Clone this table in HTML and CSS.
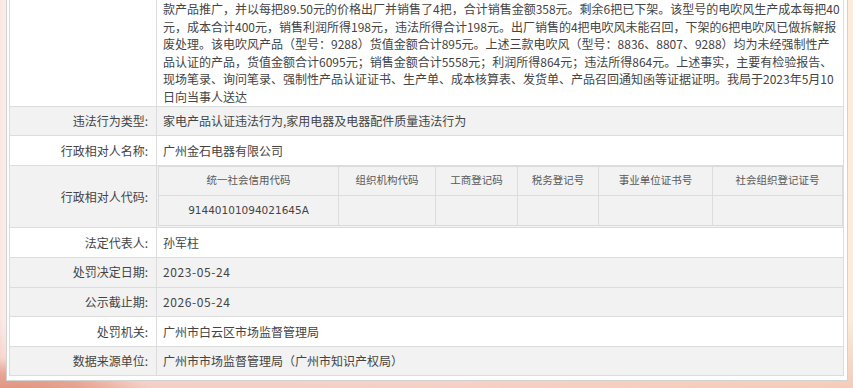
FILE: index.html
```html
<!DOCTYPE html>
<html lang="zh-CN">
<head>
<meta charset="utf-8">
<title>行政处罚信息</title>
<link rel="stylesheet" href="styles.css">
</head>
<body>
<div class="panel">
  <table class="info">
    <colgroup><col class="col-label"><col class="col-value"></colgroup>
    <tr class="row-white first">
      <th></th>
      <td class="desc">款产品推广，并以每把89.50元的价格出厂并销售了4把，合计销售金额358元。剩余6把已下架。该型号的电吹风生产成本每把40<br>元，成本合计400元，销售利润所得198元，违法所得合计198元。出厂销售的4把电吹风未能召回，下架的6把电吹风已做拆解报<br>废处理。该电吹风产品（型号：9288）货值金额合计895元。上述三款电吹风（型号：8836、8807、9288）均为未经强制性产<br>品认证的产品，货值金额合计6095元；销售金额合计5558元；利润所得864元；违法所得864元。上述事实，主要有检验报告、<br>现场笔录、询问笔录、强制性产品认证证书、生产单、成本核算表、发货单、产品召回通知函等证据证明。我局于2023年5月10<br>日向当事人送达</td>
    </tr>
    <tr class="row-gray">
      <th>违法行为类型:</th>
      <td>家电产品认证违法行为,家用电器及电器配件质量违法行为</td>
    </tr>
    <tr class="row-white">
      <th>行政相对人名称:</th>
      <td>广州金石电器有限公司</td>
    </tr>
    <tr class="row-gray row-codes">
      <th>行政相对人代码:</th>
      <td class="codes-cell">
        <table class="codes">
          <colgroup>
            <col class="c1"><col class="c2"><col class="c3"><col class="c4"><col class="c5"><col class="c6">
          </colgroup>
          <tr class="codes-head">
            <td>统一社会信用代码</td>
            <td>组织机构代码</td>
            <td>工商登记码</td>
            <td>税务登记号</td>
            <td>事业单位证书号</td>
            <td>社会组织登记证号</td>
          </tr>
          <tr class="codes-data">
            <td>91440101094021645A</td>
            <td></td>
            <td></td>
            <td></td>
            <td></td>
            <td></td>
          </tr>
        </table>
      </td>
    </tr>
    <tr class="row-white">
      <th>法定代表人:</th>
      <td>孙军柱</td>
    </tr>
    <tr class="row-gray">
      <th>处罚决定日期:</th>
      <td class="date">2023-05-24</td>
    </tr>
    <tr class="row-gray">
      <th>公示截止期:</th>
      <td class="date">2026-05-24</td>
    </tr>
    <tr class="row-white">
      <th>处罚机关:</th>
      <td>广州市白云区市场监督管理局</td>
    </tr>
    <tr class="row-gray">
      <th>数据来源单位:</th>
      <td>广州市市场监督管理局（广州市知识产权局）</td>
    </tr>
  </table>
</div>
</body>
</html>
```

FILE: styles.css
```css
html, body {
  margin: 0;
  padding: 0;
}

body {
  width: 853px;
  height: 388px;
  overflow: hidden;
  font-family: "Noto Sans CJK SC", sans-serif;
  font-size: 12px;
  color: #444;
  background:
    radial-gradient(ellipse 140px 36px at 10px 394px, #e08f7c 0, #e7a594 55%, rgba(240, 190, 175, 0) 100%),
    linear-gradient(to bottom, rgba(0,0,0,0) 320px, rgba(236, 170, 152, 0.5) 388px),
    linear-gradient(to right, #f8e6e2 0, #fbf1ec 8px, #fdf5ee 50%, #fcecd9 100%);
}

.panel {
  margin-left: 6px;
  width: 842px;
  box-sizing: border-box;
  background: #fff;
  border: 1px solid #d2d2d2;
  border-top: 0;
  padding: 0 3px 4px 2px;
}

.info {
  width: 100%;
  border-collapse: collapse;
  table-layout: fixed;
}

.col-label {
  width: 147px;
}

.info th,
.info td {
  border: 1px solid #dcdcdc;
  padding: 0 6px;
  line-height: 17.6px;
  vertical-align: middle;
}

.info tr {
  height: 29.6px;
}

.info .first th,
.info .first td {
  border-top: 0;
}

.info th {
  text-align: right;
  font-weight: normal;
  padding-right: 8px;
}

.info td {
  text-align: left;
}

.row-gray th,
.row-gray td {
  background: #f2f2f2;
}

.row-white th,
.row-white td {
  background: #fff;
}

.info .desc {
  padding-right: 2px;
  white-space: nowrap;
  overflow: hidden;
}

.date {
  letter-spacing: 0.6px;
}

.info .codes-cell {
  padding: 0 0 1px 1px;
}

.codes {
  width: 100%;
  border-collapse: collapse;
  table-layout: fixed;
  font-family: "DejaVu Sans", "Noto Sans CJK SC", sans-serif;
  font-size: 10.5px;
}

.c1 { width: 180px; }
.c2 { width: 97px; }
.c3 { width: 82px; }
.c4 { width: 81px; }
.c5 { width: 114px; }
.c6 { width: auto; }

.codes td {
  border: 1px solid #dcdcdc;
  text-align: center;
  padding: 0 4px;
  background: #f2f2f2;
}

.codes-head td {
  height: 28px;
  color: #595959;
}

.codes-data td {
  height: 29px;
  color: #444;
}
```
